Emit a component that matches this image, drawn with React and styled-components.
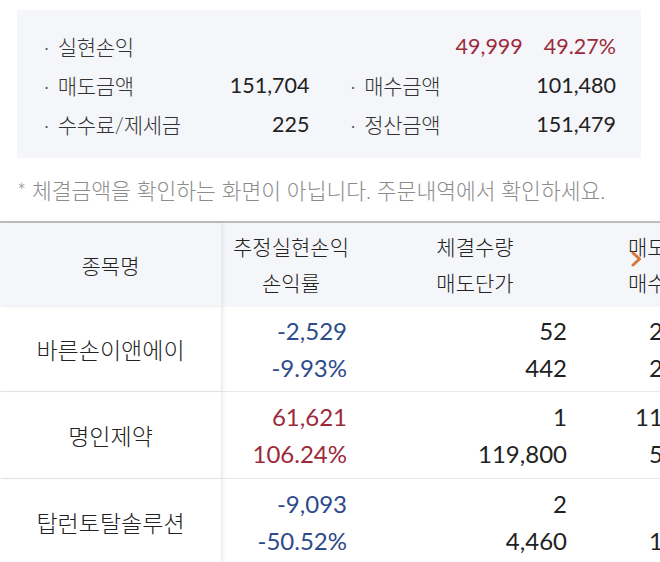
import styled, { createGlobalStyle } from 'styled-components';

const GlobalStyle = createGlobalStyle`
  html, body {
    margin: 0;
    padding: 0;
    background: #ffffff;
    overflow: hidden;
  }

  body {
    font-family: "Lato", "Noto Sans CJK KR", sans-serif;
    color: #222222;
  }
`;

const Page = styled.div`
  width: 660px;
  height: 562px;
  overflow: hidden;
  padding-top: 10px;
  box-sizing: border-box;
`;

const SummaryBox = styled.div`
  margin: 0 19px 0 17px;
  padding: 16px 25px 15px 27px;
  background: #f5f6fa;
  display: grid;
  grid-template-columns: 1fr 1fr;
  column-gap: 41px;
`;

const SummaryItem = styled.div`
  grid-column: ${({ $wide }) => ($wide ? '1 / -1' : 'auto')};
  display: flex;
  justify-content: space-between;
  align-items: center;
  height: 39px;
`;

const Label = styled.span`
  font-size: 21px;
  font-weight: 300;
  color: #333333;
  letter-spacing: -0.3px;

  &::before {
    content: "·";
    color: #555555;
    margin-right: 9px;
  }
`;

const Values = styled.div`
  display: flex;
  gap: 21px;
`;

const Value = styled.span`
  font-size: 21.5px;
  color: ${({ $tone }) => ($tone === 'up' ? '#9c2a3b' : $tone === 'down' ? '#2d4a8b' : '#222222')};
`;

const Note = styled.p`
  margin: 18px 0 15px 17px;
  font-size: 21.5px;
  font-weight: 300;
  line-height: 30px;
  color: #8c8c8c;
  white-space: nowrap;
`;

const Table = styled.div`
  position: relative;
  width: 750px;
  border-top: 2px solid #bdbdbd;
`;

const Row = styled.div`
  display: grid;
  grid-template-columns: 222px 138px 230px 160px;
  height: ${({ $h }) => $h}px;
  background: ${({ $head }) => ($head ? '#f5f6fa' : '#ffffff')};
  border-bottom: ${({ $head }) => ($head ? 'none' : '1px solid #e9e9ec')};
`;

const NameCell = styled.div`
  display: flex;
  align-items: center;
  justify-content: center;
  font-size: ${({ $head }) => ($head ? '21px' : '23px')};
  font-weight: 300;
  color: #222222;
  border-right: 1px solid #ececef;
  box-shadow: 2px 0 3px rgba(0, 0, 0, 0.05);
  position: relative;
  z-index: 1;
`;

const HeadCell = styled.div`
  display: flex;
  flex-direction: column;
  align-items: ${({ $align }) => $align || 'center'};
  justify-content: center;
  padding-left: ${({ $indent }) => $indent || 0}px;
  font-size: 21px;
  font-weight: 300;
  line-height: 36px;
  color: #222222;
  white-space: nowrap;
`;

const NumCell = styled.div`
  display: flex;
  flex-direction: column;
  align-items: flex-end;
  justify-content: center;
  padding-right: ${({ $pad }) => $pad}px;
  font-size: 24px;
  line-height: 37px;
  white-space: nowrap;
  color: ${({ $tone }) => ($tone === 'up' ? '#9c2a3b' : $tone === 'down' ? '#2d4a8b' : '#222222')};
`;

const ScrollHint = styled.svg`
  position: absolute;
  left: 631px;
  top: 28px;
  width: 11px;
  height: 16px;
`;

const rows = [
  { name: '바른손이앤에이', pnl: '-2,529', rate: '-9.93%', tone: 'down', qty: '52', price: '442', c4a: '22,984', c4b: '25,513', h: 84 },
  { name: '명인제약', pnl: '61,621', rate: '106.24%', tone: 'up', qty: '1', price: '119,800', c4a: '119,800', c4b: '58,179', h: 86 },
  { name: '탑런토탈솔루션', pnl: '-9,093', rate: '-50.52%', tone: 'down', qty: '2', price: '4,460', c4a: '892', c4b: '18,000', h: 86 },
];

const App = () => {
  return (
    <>
      <GlobalStyle />
      <Page>
        <SummaryBox>
          <SummaryItem $wide>
            <Label>실현손익</Label>
            <Values>
              <Value $tone="up">49,999</Value>
              <Value $tone="up">49.27%</Value>
            </Values>
          </SummaryItem>
          <SummaryItem>
            <Label>매도금액</Label>
            <Value>151,704</Value>
          </SummaryItem>
          <SummaryItem>
            <Label>매수금액</Label>
            <Value>101,480</Value>
          </SummaryItem>
          <SummaryItem>
            <Label>수수료/제세금</Label>
            <Value>225</Value>
          </SummaryItem>
          <SummaryItem>
            <Label>정산금액</Label>
            <Value>151,479</Value>
          </SummaryItem>
        </SummaryBox>

        <Note>* 체결금액을 확인하는 화면이 아닙니다. 주문내역에서 확인하세요.</Note>

        <Table>
          <Row $head $h={84}>
            <NameCell $head>종목명</NameCell>
            <HeadCell>
              <span>추정실현손익</span>
              <span>손익률</span>
            </HeadCell>
            <HeadCell>
              <span>체결수량</span>
              <span>매도단가</span>
            </HeadCell>
            <HeadCell $align="flex-start" $indent={38}>
              <span>매도금액</span>
              <span>매수금액</span>
            </HeadCell>
          </Row>
          {rows.map((r) => (
            <Row key={r.name} $h={r.h}>
              <NameCell>{r.name}</NameCell>
              <NumCell $pad={13} $tone={r.tone}>
                <span>{r.pnl}</span>
                <span>{r.rate}</span>
              </NumCell>
              <NumCell $pad={23}>
                <span>{r.qty}</span>
                <span>{r.price}</span>
              </NumCell>
              <NumCell $pad={26}>
                <span>{r.c4a}</span>
                <span>{r.c4b}</span>
              </NumCell>
            </Row>
          ))}
          <ScrollHint viewBox="0 0 11 16" fill="none">
            <path d="M2 2 L8.5 8 L2 14" stroke="#d4773b" strokeWidth="3" strokeLinecap="round" strokeLinejoin="round" />
          </ScrollHint>
        </Table>
      </Page>
    </>
  );
};

export default App;
